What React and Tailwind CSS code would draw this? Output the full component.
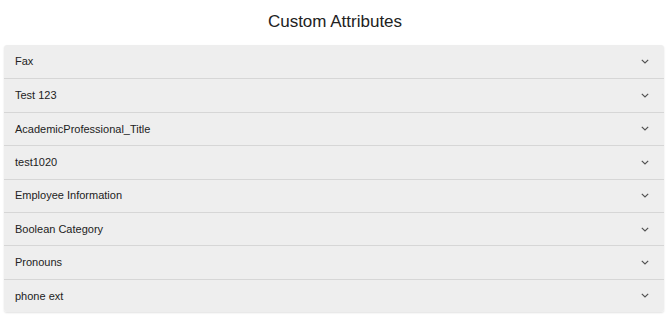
import React from 'react'

const items = [
  'Fax',
  'Test 123',
  'AcademicProfessional_Title',
  'test1020',
  'Employee Information',
  'Boolean Category',
  'Pronouns',
  'phone ext',
]

const Chevron = () => (
  <svg width="8" height="5" viewBox="0 0 8 5" fill="none">
    <path d="M0.8 0.8L4 4L7.2 0.8" stroke="#555" strokeWidth="1.2" />
  </svg>
)

export default function App() {
  return (
    <div className="w-[670px] h-[323px] bg-white font-['Liberation_Sans',Arial,sans-serif]">
      <h1 className="text-center text-[17px] text-[#222] leading-[22px] pt-[11px] h-[45px]">
        Custom Attributes
      </h1>
      <div className="mx-[4px] w-[660px] rounded-[3px] overflow-hidden shadow-[0_1px_2px_rgba(0,0,0,0.12)]">
        {items.map((name, idx) => (
          <div
            key={name}
            className={
              'flex items-center justify-between h-[33.375px] bg-[#eeeeee] pl-[11px] pr-[15px] ' +
              (idx > 0 ? 'border-t border-[#d6d6d6]' : '')
            }
          >
            <span className="text-[11px] text-[#222]">{name}</span>
            <Chevron />
          </div>
        ))}
      </div>
    </div>
  )
}
